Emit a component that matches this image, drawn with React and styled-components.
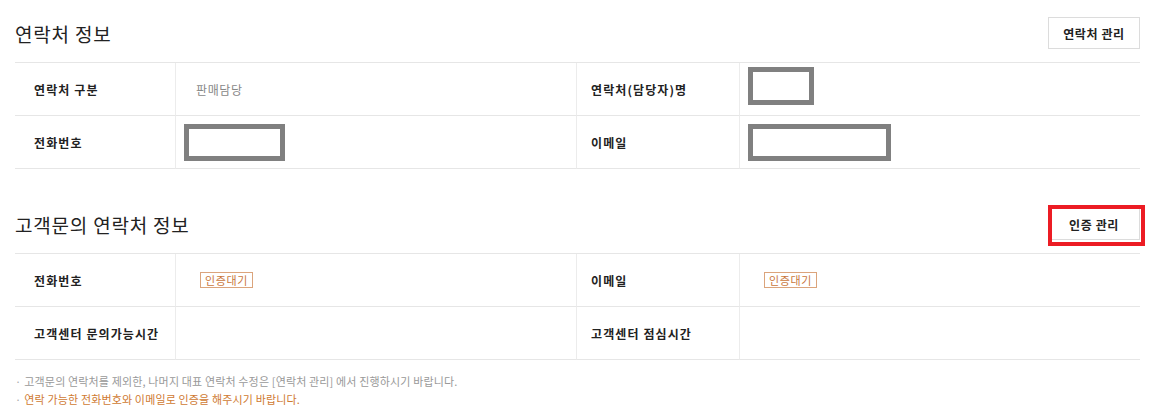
import styled, { createGlobalStyle } from "styled-components";

const GlobalStyle = createGlobalStyle`
  body {
    margin: 0;
    background: #fff;
    font-family: "Noto Sans CJK KR", "Noto Sans", sans-serif;
    color: #222;
  }
`;

const Page = styled.div`
  width: 1125px;
  padding: 17px 0 0 15px;
`;

const Section = styled.section`
  margin-bottom: ${(p) => p.$gap || 0}px;
`;

const Header = styled.div`
  display: flex;
  align-items: center;
  justify-content: space-between;
  height: 32px;
  margin-bottom: 13px;
`;

const Title = styled.h2`
  margin: 0;
  font-size: 19px;
  font-weight: 400;
  color: #222;
  letter-spacing: 0.8px;
`;

const Button = styled.button`
  position: relative;
  width: 92px;
  height: 32px;
  border: 1px solid #dcdcdc;
  background: #fff;
  font-family: inherit;
  font-size: 12px;
  font-weight: 700;
  letter-spacing: 0.6px;
  color: #222;
  cursor: pointer;

  &::after {
    content: "";
    display: ${(p) => (p.$marked ? "block" : "none")};
    position: absolute;
    left: -1px;
    top: -4px;
    right: -6px;
    bottom: -7px;
    border: 4px solid #ec1c24;
  }
`;

const Table = styled.div`
  display: grid;
  grid-template-columns: 161px 400px 164px 1fr;
  border-top: 1px solid #e6e6e6;
`;

const Label = styled.div`
  display: flex;
  align-items: center;
  height: 52px;
  padding-left: ${(p) => (p.$first ? 19 : 14)}px;
  border-bottom: 1px solid #e6e6e6;
  border-right: 1px solid #ececec;
  border-left: ${(p) => (p.$first ? "none" : "1px solid #ececec")};
  font-size: 12px;
  font-weight: 700;
  letter-spacing: 1.1px;
  color: #222;
`;

const Value = styled.div`
  display: flex;
  align-items: center;
  height: 52px;
  padding-left: 20px;
  border-bottom: 1px solid #e6e6e6;
  font-size: 12px;
  letter-spacing: 0.6px;
  color: #888;
`;

const Redact = styled.div`
  width: ${(p) => p.$w}px;
  height: ${(p) => p.$h}px;
  border: 5px solid #808080;
  box-sizing: border-box;
  background: #fff;
  margin-left: -12px;
  margin-top: ${(p) => p.$top || 0}px;
`;

const Badge = styled.span`
  display: inline-block;
  padding: 0 4px;
  height: 16px;
  line-height: 15px;
  box-sizing: border-box;
  border: 1px solid #dba47c;
  color: #c9773c;
  font-size: 11px;
  letter-spacing: 0.6px;
  margin-left: 4px;
`;

const Notes = styled.ul`
  list-style: none;
  margin: 12px 0 0;
  padding: 0;
`;

const Note = styled.li`
  font-size: 11px;
  line-height: 18px;
  letter-spacing: 0.15px;
  color: ${(p) => (p.$accent ? "#cf7a32" : "#999")};
  &::before {
    content: "·";
    margin-right: 3px;
    color: #aaa;
  }
`;

export default function App() {
  return (
    <>
      <GlobalStyle />
      <Page>
        <Section $gap={39}>
          <Header>
            <Title>연락처 정보</Title>
            <Button>연락처 관리</Button>
          </Header>
          <Table>
            <Label $first>연락처 구분</Label>
            <Value>판매담당</Value>
            <Label>연락처(담당자)명</Label>
            <Value>
              <Redact $w={66} $h={38} $top={-6} />
            </Value>
            <Label $first>전화번호</Label>
            <Value>
              <Redact $w={101} $h={37} />
            </Value>
            <Label>이메일</Label>
            <Value>
              <Redact $w={143} $h={37} />
            </Value>
          </Table>
        </Section>
        <Section>
          <Header>
            <Title>고객문의 연락처 정보</Title>
            <Button $marked>인증 관리</Button>
          </Header>
          <Table>
            <Label $first>전화번호</Label>
            <Value>
              <Badge>인증대기</Badge>
            </Value>
            <Label>이메일</Label>
            <Value>
              <Badge>인증대기</Badge>
            </Value>
            <Label $first>고객센터 문의가능시간</Label>
            <Value />
            <Label>고객센터 점심시간</Label>
            <Value />
          </Table>
          <Notes>
            <Note>고객문의 연락처를 제외한, 나머지 대표 연락처 수정은 [연락처 관리] 에서 진행하시기 바랍니다.</Note>
            <Note $accent>연락 가능한 전화번호와 이메일로 인증을 해주시기 바랍니다.</Note>
          </Notes>
        </Section>
      </Page>
    </>
  );
}
